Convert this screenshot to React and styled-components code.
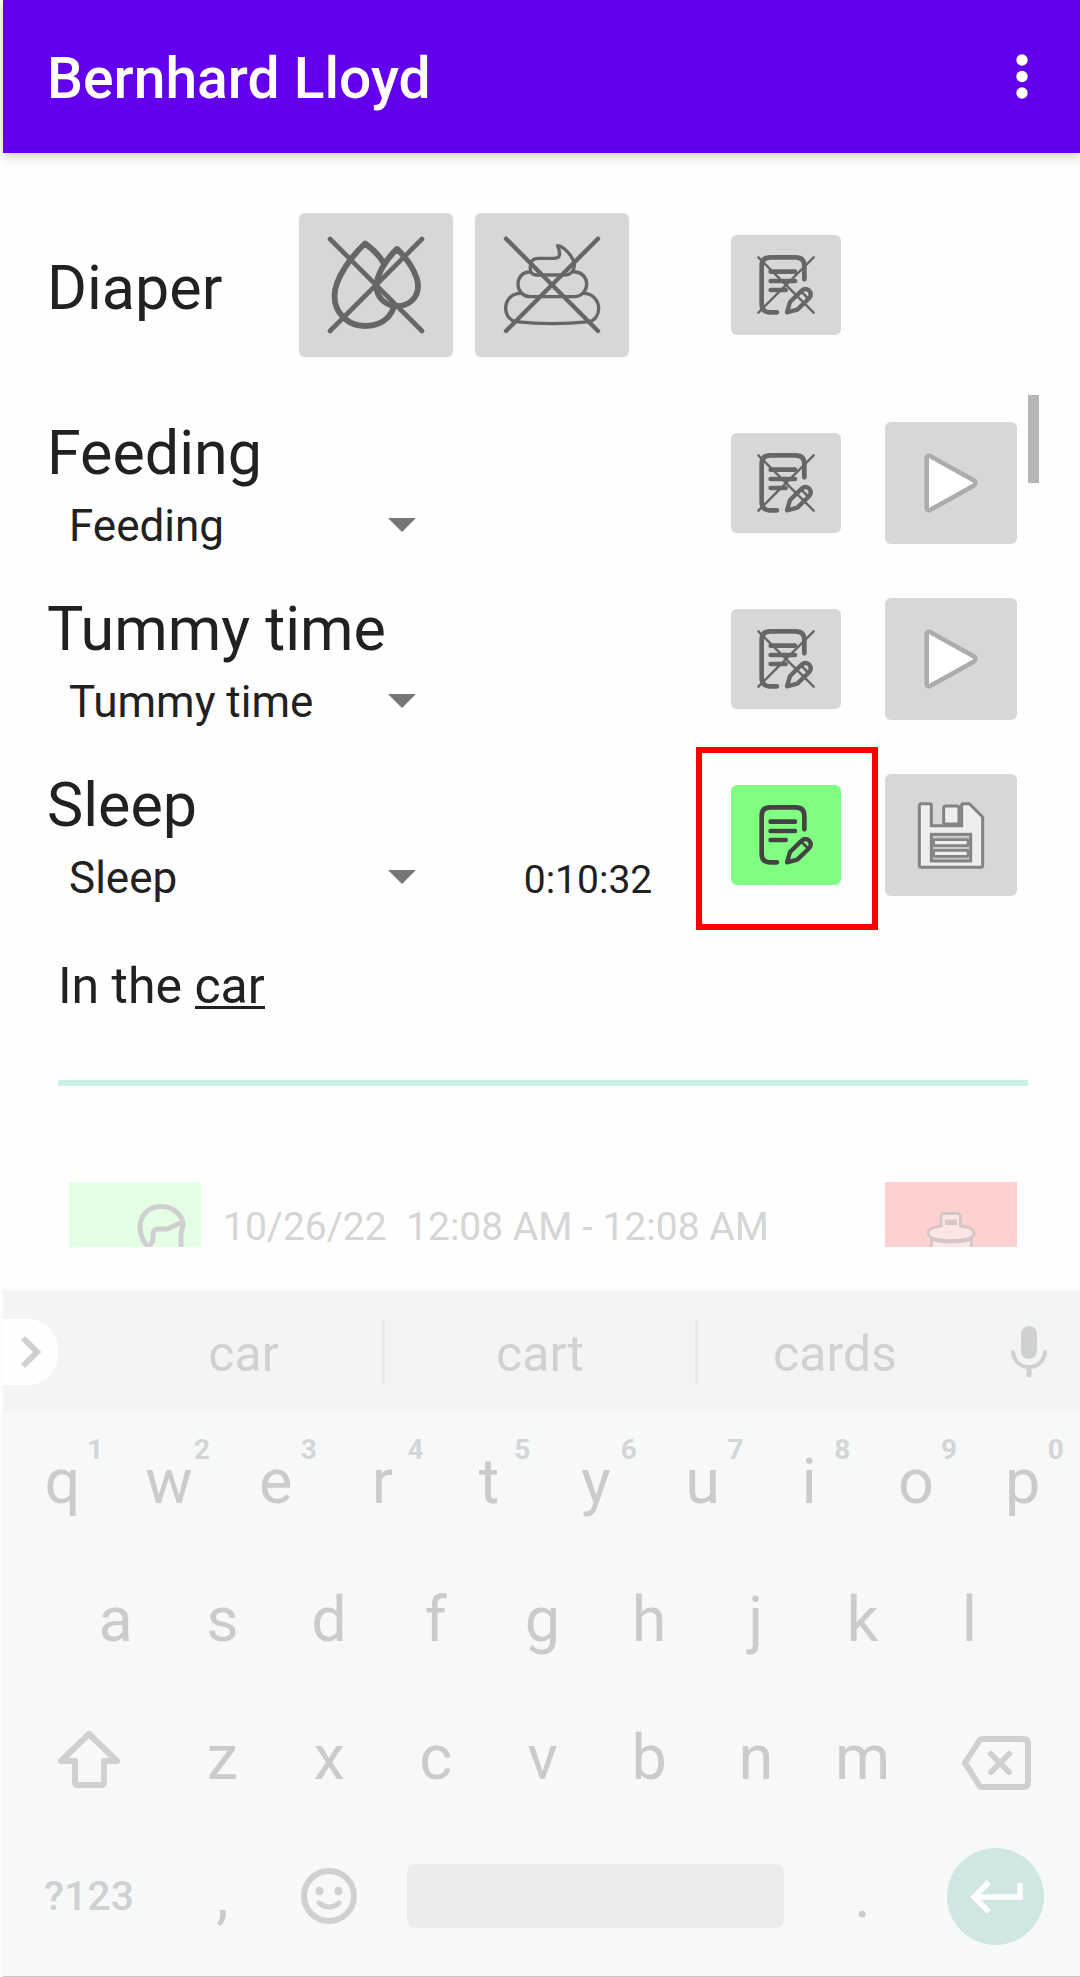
import React, { useState } from "react";
import styled, { createGlobalStyle, css } from "styled-components";

const GlobalStyle = createGlobalStyle`
  *, *::before, *::after { box-sizing: border-box; }
  body { margin: 0; background: #fefefe; }
  button, input, select { font: inherit; color: inherit; }
  button { border: 0; padding: 0; background: none; cursor: pointer; }
  svg { display: block; }
`;

const Page = styled.div`
  padding-left: 3px;
  overflow: hidden;
  font-family: Roboto, "Liberation Sans", sans-serif;
  color: #212121;
`;

const AppBar = styled.header`
  display: flex;
  align-items: center;
  justify-content: space-between;
  height: 153px;
  padding: 0 41px 0 44px;
  background: #6200ee;
  color: #fff;
  box-shadow: 0 4px 10px rgba(0, 0, 0, 0.18);
`;

const AppTitle = styled.h1`
  margin: 0;
  padding-top: 4px;
  font-size: 57px;
  line-height: 64px;
  font-weight: 500;
`;

const MenuButton = styled.button`
  display: flex;
  justify-content: center;
  width: 34px;
`;

const Content = styled.main`
  padding: 60px 41px 0 44px;
`;

const RowTitle = styled.h2`
  margin: 0;
  font-size: 61px;
  line-height: 60px;
  font-weight: 400;
`;

const DiaperRow = styled.section`
  display: flex;
  align-items: center;
  padding: 0 198px 38px 0;
`;

const DiaperTitle = styled(RowTitle)`
  width: 252px;
  padding-top: 6px;
`;

const DiaperKinds = styled.div`
  display: flex;
  gap: 22px;
  margin-right: auto;
`;

const sizes = {
  kind: css`width: 154px; height: 144px;`,
  note: css`width: 110px; height: 100px;`,
  action: css`width: 132px; height: 122px;`,
};

const Tile = styled.button`
  display: flex;
  align-items: center;
  justify-content: center;
  flex: none;
  border-radius: 6px;
  background: ${(p) => (p.$active ? "#80ff80" : "#d6d8d7")};
  color: ${(p) => (p.$active ? "#434343" : "#656765")};
  ${(p) => sizes[p.$size]}
`;

const Highlight = styled.div`
  position: relative;
  ${(p) =>
    p.$on &&
    css`
      &::after {
        content: "";
        position: absolute;
        inset: -38px -37px -45px -35px;
        border: 6px solid #ff0000;
        pointer-events: none;
      }
    `}
`;

const Timers = styled.div`
  position: relative;
`;

const ScrollThumb = styled.div`
  position: absolute;
  top: 0;
  right: 0;
  width: 11px;
  height: 88px;
  background: #b6b6b6;
`;

const TimerRow = styled.section`
  display: grid;
  grid-template-columns: 398px 1fr 110px 132px;
  column-gap: 44px;
  align-items: center;
  height: 176px;
  padding-right: 22px;
`;

const TimerName = styled.div`
  display: flex;
  flex-direction: column;
  align-self: end;
  gap: 13px;
  padding-bottom: 15px;
`;

const SelectBox = styled.div`
  position: relative;
  width: 390px;

  svg {
    position: absolute;
    right: 21px;
    top: 22px;
    pointer-events: none;
  }
`;

const TypeSelect = styled.select`
  appearance: none;
  width: 100%;
  height: 60px;
  padding: 0 60px 0 22px;
  border: 0;
  background: none;
  font-size: 44px;
  line-height: 60px;
`;

const Elapsed = styled.time`
  align-self: end;
  justify-self: center;
  padding-bottom: 13px;
  font-size: 39px;
  line-height: 60px;
`;

const NoteInput = styled.input`
  display: block;
  width: calc(100% - 22px);
  height: 143px;
  margin: 20px 11px 96px;
  padding: 0 0 51px;
  border: 0;
  border-bottom: 6px solid #c9f1e9;
  border-radius: 0;
  outline: 0;
  background: linear-gradient(#212121, #212121) 137px 63px / 70px 3px no-repeat;
  font-size: 50px;
`;

const History = styled.section`
  display: flex;
  gap: 22px;
  height: 65px;
  margin: 0 22px 44px;
`;

const HistoryButton = styled.button`
  flex: none;
  width: 132px;
  height: 65px;
  background: ${(p) => (p.$danger ? "#ffd0d0" : "#e5ffe5")};
`;

const HistoryTime = styled.p`
  flex: 1;
  margin: 0;
  padding-top: 25px;
  font-size: 39px;
  line-height: 40px;
  white-space: pre;
  color: #d5d5d5;
`;

const Keyboard = styled.section`
  border-bottom: 1px solid #c8c8c8;
  background: #f7f9f8;
  box-shadow: 0 -2px 5px rgba(0, 0, 0, 0.03);
  color: #cacbcd;
`;

const Suggestions = styled.div`
  display: grid;
  grid-template-columns: 102px 280fr 313fr 274fr 108px;
  align-items: center;
  height: 121px;
  background: #f3f5f4;
`;

const ExpandChip = styled.button`
  display: flex;
  align-items: center;
  width: 55px;
  height: 66px;
  padding-left: 17px;
  border-radius: 0 30px 30px 0;
  background: #fefefe;
  color: #ced0d1;
`;

const Suggestion = styled.button`
  height: 66px;
  padding-top: 5px;
  border-right: ${(p) => (p.$last ? 0 : "3px solid #e8eae9")};
  font-size: 50px;
  line-height: 60px;
  color: #d0d1d3;
`;

const MicButton = styled.button`
  display: flex;
  justify-content: center;
  padding-left: 6px;
  color: #ced0d1;
`;

const Keys = styled.div`
  display: grid;
  padding: 1px 4px 11px 6px;
`;

const KeyRow = styled.div`
  display: grid;
  grid-template-columns: repeat(20, 1fr);
  height: 138px;
`;

const Key = styled.button`
  position: relative;
  display: flex;
  align-items: center;
  justify-content: center;
  min-width: 0;
  grid-column: ${(p) => (p.$start ? `${p.$start} / ` : "")}span ${(p) => p.$span || 2};
  font-size: ${(p) => (p.$small ? 41 : 63)}px;
  font-weight: ${(p) => (p.$small ? 500 : 400)};
  line-height: 74px;
  color: ${(p) => (p.$small ? "#ced0d1" : "#cacbcd")};
`;

const Hint = styled.span`
  position: absolute;
  top: 20px;
  left: calc(50% + 25px);
  font-size: 28px;
  font-weight: 700;
  line-height: 34px;
  color: #d4d5d7;
`;

const SpaceKey = styled.button`
  grid-column: span 8;
  align-self: center;
  height: 64px;
  margin: 0 25px;
  border-radius: 8px;
  background: #ebecee;
`;

const EnterDisc = styled.span`
  display: flex;
  align-items: center;
  justify-content: center;
  width: 97px;
  height: 97px;
  border-radius: 50%;
  background: #d0e6e2;
`;

const stroke = {
  fill: "none",
  stroke: "currentColor",
  strokeLinecap: "round",
  strokeLinejoin: "round",
};

const WetIcon = () => (
  <svg width="100" height="100" viewBox="0 0 100 100" {...stroke} strokeWidth="5.800">
    <path d="M57 27C52 19 44 12 39 8.500C28 19 8.500 42 8.500 61C8.500 78 22 91 39 91C52 91 63 85 67.500 73" />
    <path d="M71 14C60 24 50.500 40 50.500 51C50.500 63 60 71 71 71C83 71 92 63 92 51C92 40 82 24 71 14Z" />
    <path d="M4 4L96 96M96 4L4 96" strokeWidth="4.600" />
  </svg>
);

const SolidIcon = () => (
  <svg width="100" height="100" viewBox="81 66 300 300" {...stroke} strokeWidth="10">
    <path d="M248 98C262 99 296 128 298 155C298 176 284 186 268 186H186C170 186 164 176 166 160C166 140 178 136 190 136H236C256 136 258 124 248 98Z" />
    <path d="M166 177C142 176 129 194 129 213C129 236 146 251 166 251H298C320 250 335 234 335 213C335 194 320 176 298 177" />
    <path d="M138 241C108 241 92 262 92 286C92 306 104 322 122 326C190 333 274 333 342 326C360 322 371 306 371 286C371 262 352 241 326 241" />
    <path d="M93 77L369 354M369 77L93 354" strokeWidth="13" />
  </svg>
);

const NoteIcon = ({ crossed }) => (
  <svg width="60" height="60" viewBox="75 93 180 180" {...stroke} strokeWidth="14">
    <path d="M220 166V126Q220 100 194 100H118Q92 100 92 126V239Q92 265 118 265H138" />
    <path d="M119 143H192M119 171H192M119 198H164" />
    <path d="M168 265L177 234L212 200Q223 190 234 199Q244 211 235 222L199 257Z" strokeWidth="13" />
    <path d="M210 202L231 223" strokeWidth="8" />
    {crossed && <path d="M82 100L248 266M248 100L82 266" strokeWidth="7" />}
  </svg>
);

const PlayIcon = () => (
  <svg width="60" height="60" viewBox="843 159 180 180">
    <path
      d="M860 175Q861 166 870 168L1001 241Q1012 249 1001 257L870 330Q861 332 860 323Z"
      fill="#fff"
      stroke="#abadac"
      strokeWidth="14"
      strokeLinejoin="round"
    />
  </svg>
);

const SaveIcon = () => (
  <svg width="70" height="70" viewBox="555 78 210 210" fill="#eee" stroke="#828483" strokeWidth="9">
    <path d="M565 95Q565 89 571 89H596Q601 89 601 94V155H692V94Q692 89 697 89H715L755 129V274Q755 280 749 280H571Q565 280 565 274Z" />
    <rect x="638" y="96" width="46" height="54" rx="6" />
    <rect x="601" y="181" width="118" height="80" fill="#c8caca" />
    <rect x="608" y="197" width="103" height="18" rx="3" strokeWidth="8" />
    <rect x="608" y="229" width="103" height="18" rx="3" strokeWidth="8" />
  </svg>
);

const ChildIcon = () => (
  <svg width="132" height="65" viewBox="0 0 132 65" {...stroke} stroke="#d0cfd0" strokeWidth="5">
    <path d="M80 65C74 60 71 53 71 45C71 33 80 24.500 92 24.500C104 24.500 114 33 114 43C114 46 112 48 112 54V68" />
    <path d="M79 65Q84 62 84 55C84 49 85 47 90 47H97C102 47 105 42 113 41" />
  </svg>
);

const TrashIcon = () => (
  <svg width="132" height="65" viewBox="0 0 132 65" fill="#fee5e5" stroke="#d6c7c7" strokeWidth="3">
    <path d="M46.500 57V70H86.500V57" />
    <path d="M56 44V34Q56 31.500 58.500 31.500H73Q75.500 31.500 75.500 34V44C84 45 89 47 89 51C89 54 86 57 78 58Q66 60 54 58C46 57 43 54 43 51C43 47 48 45 56 44Z" />
    <path d="M47 57Q66 62 86 57" fill="none" strokeWidth="4" />
    <path d="M60 37.500H72V43H60Z" fill="#d6c7c7" stroke="none" />
  </svg>
);

const ArrowDown = () => (
  <svg width="28" height="14" viewBox="0 0 28 14" fill="#757575">
    <path d="M0 0H28L14 14Z" />
  </svg>
);

const ShiftIcon = () => (
  <svg width="62" height="63" viewBox="0 -4 62 63" {...stroke} strokeWidth="6">
    <path d="M31 3L3 30H17V51Q17 54 20 54H43Q46 54 46 51V30H59Z" />
  </svg>
);

const BackspaceIcon = () => (
  <svg width="70" height="65" viewBox="0 -10 70 65" {...stroke} strokeWidth="6">
    <path d="M21 3H62Q67 3 67 8V46Q67 51 62 51H21Q19 51 18 49L4 27L18 5Q19 3 21 3Z" />
    <path d="M30 18L48 36M48 18L30 36" />
  </svg>
);

const SmileIcon = () => (
  <svg width="56" height="56" viewBox="0 0 56 56" {...stroke} strokeWidth="6">
    <circle cx="28" cy="28" r="25" />
    <path d="M18 35Q28 43 38 35" strokeWidth="5" />
    <circle cx="18.500" cy="23" r="4.200" fill="currentColor" stroke="none" />
    <circle cx="37.500" cy="23" r="4.200" fill="currentColor" stroke="none" />
  </svg>
);

const EnterIcon = () => (
  <svg width="54" height="34" viewBox="0 0 54 34" fill="none" stroke="#fff" strokeWidth="5.500">
    <path d="M20 3L5 18L20 33M5 18H51V4" />
  </svg>
);

const MicIcon = () => (
  <svg width="36" height="52" viewBox="0 0 36 52" {...stroke} strokeWidth="4">
    <rect x="10" y="0" width="16" height="33" rx="8" fill="currentColor" stroke="none" />
    <path d="M2 26C3 36 10 41 18 41S33 36 34 26" />
    <path d="M18 42V49" strokeWidth="5" />
  </svg>
);

const ChevronIcon = () => (
  <svg width="22" height="34" viewBox="0 0 22 34" fill="none" stroke="currentColor" strokeWidth="6">
    <path d="M3 3L17 17L3 31" />
  </svg>
);

const TIMERS = [
  { name: "Feeding" },
  { name: "Tummy time" },
  { name: "Sleep", elapsed: "0:10:32", running: true },
];

const TOP_ROW = "qwertyuiop";
const HOME_ROW = "asdfghjkl";
const BOTTOM_ROW = "zxcvbnm";

export default function App() {
  const [note, setNote] = useState("In the car");

  return (
    <>
      <GlobalStyle />
      <Page>
        <AppBar>
          <AppTitle>Bernhard Lloyd</AppTitle>
          <MenuButton aria-label="More options">
            <svg width="12" height="45" viewBox="0 0 12 45" fill="#fff">
              <circle cx="6" cy="6" r="5.700" />
              <circle cx="6" cy="22.500" r="5.700" />
              <circle cx="6" cy="39" r="5.700" />
            </svg>
          </MenuButton>
        </AppBar>

        <Content>
          <DiaperRow>
            <DiaperTitle>Diaper</DiaperTitle>
            <DiaperKinds>
              <Tile $size="kind" aria-label="Wet">
                <WetIcon />
              </Tile>
              <Tile $size="kind" aria-label="Solid">
                <SolidIcon />
              </Tile>
            </DiaperKinds>
            <Tile $size="note" aria-label="Diaper note">
              <NoteIcon crossed />
            </Tile>
          </DiaperRow>

          <Timers>
            <ScrollThumb />
            {TIMERS.map(({ name, elapsed, running }) => (
              <TimerRow key={name}>
                <TimerName>
                  <RowTitle>{name}</RowTitle>
                  <SelectBox>
                    <TypeSelect aria-label={`${name} timer type`} defaultValue={name}>
                      {TIMERS.map((t) => (
                        <option key={t.name}>{t.name}</option>
                      ))}
                    </TypeSelect>
                    <ArrowDown />
                  </SelectBox>
                </TimerName>
                {elapsed ? <Elapsed>{elapsed}</Elapsed> : <span />}
                <Highlight $on={running}>
                  <Tile $size="note" $active={running} aria-label={`${name} note`}>
                    <NoteIcon crossed={!running} />
                  </Tile>
                </Highlight>
                <Tile $size="action" aria-label={running ? "Save" : "Start"}>
                  {running ? <SaveIcon /> : <PlayIcon />}
                </Tile>
              </TimerRow>
            ))}
            <NoteInput
              aria-label="Note"
              spellCheck={false}
              value={note}
              onChange={(e) => setNote(e.target.value)}
            />
          </Timers>

          <History>
            <HistoryButton aria-label="Edit entry">
              <ChildIcon />
            </HistoryButton>
            <HistoryTime>{"10/26/22  12:08 AM - 12:08 AM"}</HistoryTime>
            <HistoryButton $danger aria-label="Delete entry">
              <TrashIcon />
            </HistoryButton>
          </History>
        </Content>

        <Keyboard aria-label="Keyboard">
          <Suggestions>
            <ExpandChip aria-label="Expand">
              <ChevronIcon />
            </ExpandChip>
            <Suggestion>car</Suggestion>
            <Suggestion>cart</Suggestion>
            <Suggestion $last>cards</Suggestion>
            <MicButton aria-label="Voice input">
              <MicIcon />
            </MicButton>
          </Suggestions>
          <Keys>
            <KeyRow>
              {[...TOP_ROW].map((k, i) => (
                <Key key={k}>
                  {k}
                  <Hint>{(i + 1) % 10}</Hint>
                </Key>
              ))}
            </KeyRow>
            <KeyRow>
              {[...HOME_ROW].map((k, i) => (
                <Key key={k} $start={i === 0 ? 2 : undefined}>
                  {k}
                </Key>
              ))}
            </KeyRow>
            <KeyRow>
              <Key $span={3} $small aria-label="Shift">
                <ShiftIcon />
              </Key>
              {[...BOTTOM_ROW].map((k) => (
                <Key key={k}>{k}</Key>
              ))}
              <Key $span={3} $small aria-label="Backspace">
                <BackspaceIcon />
              </Key>
            </KeyRow>
            <KeyRow>
              <Key $span={3} $small>
                ?123
              </Key>
              <Key>,</Key>
              <Key $small aria-label="Emoji">
                <SmileIcon />
              </Key>
              <SpaceKey aria-label="Space" />
              <Key>.</Key>
              <Key $span={3} aria-label="Enter">
                <EnterDisc>
                  <EnterIcon />
                </EnterDisc>
              </Key>
            </KeyRow>
          </Keys>
        </Keyboard>
      </Page>
    </>
  );
}
